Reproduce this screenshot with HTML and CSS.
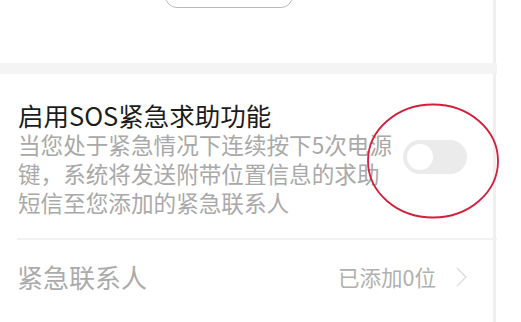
FILE: index.html
```html
<!DOCTYPE html>
<html lang="zh-CN">
<head>
    <meta charset="UTF-8">
    <meta name="viewport" content="width=device-width, initial-scale=1.0">
    <title>SOS紧急求助</title>
    <link rel="stylesheet" href="styles.css">
</head>
<body>
    <div class="screen">
        <div class="top">
            <div class="pill-button"></div>
        </div>
        <div class="band"></div>

        <div class="sos-row">
            <div class="sos-text">
                <div class="sos-title">启用SOS紧急求助功能</div>
                <div class="sos-desc">当您处于紧急情况下连续按下5次电源<br>键，系统将发送附带位置信息的求助<br>短信至您添加的紧急联系人</div>
            </div>
            <div class="switch"><span class="knob"></span></div>
        </div>

        <div class="divider"></div>

        <div class="contact-row">
            <span class="contact-label">紧急联系人</span>
            <span class="contact-value">已添加0位</span>
            <svg class="chevron" width="11" height="20" viewBox="0 0 11 20">
                <polyline points="1,1 10,10 1,19" fill="none" stroke="#dcdcdc" stroke-width="1.4"/>
            </svg>
        </div>
    </div>

    <!-- red marker circled around the switch -->
    <svg class="marker" width="136" height="120" viewBox="0 0 136 120">
        <ellipse cx="68" cy="60" rx="65" ry="56.5" fill="none" stroke="#d21f3c" stroke-width="1.8"/>
    </svg>
</body>
</html>
```

FILE: styles.css
```css
body {
    margin: 0;
    background-color: #fff;
    font-family: "Noto Sans CJK SC", "Noto Sans", sans-serif;
    overflow: hidden;
}

.screen {
    width: 493px;
    height: 322px;
    border-right: 3px solid #efefef;
}

.top {
    display: flex;
    align-items: flex-start;
    height: 63px;
    padding-left: 165px;
    overflow: hidden;
}

.pill-button {
    flex: none;
    width: 126px;
    height: 40px;
    margin-top: -34px;
    border: 1.5px solid #b9b9b9;
    border-radius: 12px;
}

.band {
    height: 11px;
    background-color: #f4f4f4;
    margin-right: -4px;
}

.sos-row {
    display: flex;
    align-items: flex-start;
    padding: 25px 26px 0 18px;
}

.sos-text {
    flex: 1;
}

.sos-title {
    font-size: 25.5px;
    line-height: 31px;
    color: #1c1c1c;
}

.sos-desc {
    font-size: 22.6px;
    line-height: 29px;
    color: #a9a9a9;
}

.switch {
    flex: none;
    margin-top: 41px;
    width: 64px;
    height: 34px;
    border-radius: 17px;
    background-color: #ebebeb;
    display: flex;
    align-items: center;
    padding-left: 4px;
    box-sizing: border-box;
}

.knob {
    width: 26px;
    height: 26px;
    border-radius: 50%;
    background-color: #fff;
}

.divider {
    margin: 21px -4px 0 17px;
    height: 1.5px;
    background-color: #f1f1f1;
}

.contact-row {
    display: flex;
    align-items: center;
    height: 74px;
    padding: 0 26px 0 17px;
}

.contact-label {
    flex: 1;
    font-size: 26px;
    color: #ababab;
}

.contact-value {
    font-size: 21.5px;
    color: #b0b0b0;
    margin-right: 20px;
}

.marker {
    position: absolute;
    left: 365px;
    top: 101px;
}
```
